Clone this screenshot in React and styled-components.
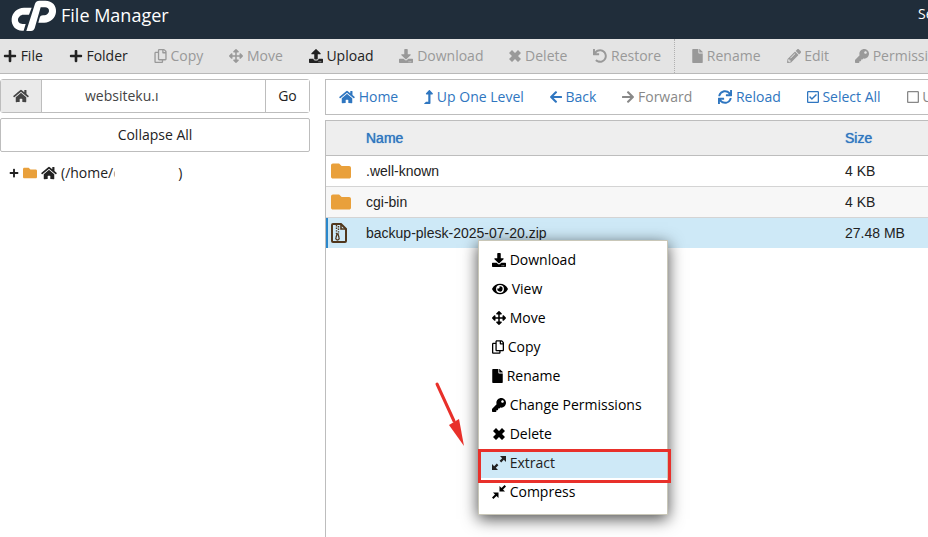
import React from "react";
import styled, { createGlobalStyle } from "styled-components";
import {
  FaArrowLeft,
  FaArrowRight,
  FaArrowsAlt,
  FaDownload,
  FaEye,
  FaFile,
  FaFolder,
  FaHome,
  FaKey,
  FaLevelUpAlt,
  FaPencilAlt,
  FaPlus,
  FaRegCheckSquare,
  FaRegCopy,
  FaRegSquare,
  FaSync,
  FaUndo,
  FaUpload,
} from "react-icons/fa";

const CpLogo = () => (
  <svg width="46" height="32" viewBox="0 0 138 96" role="img" aria-label="cPanel">
    <path
      fill="#fff"
      d="M62 23H39C18 23 4 38 2 56c-2 21 13 36 31 36h5l6-20h-9c-9 0-15-6-14-14 1-7 8-14 16-14h17Z"
    />
    <path
      fill="#fff"
      d="M72 11C74 5 79 2 85 2h18c21 0 34 15 32 34-2 18-16 32-35 32H82l4-15c2-5 5-7 10-7h4c7 0 13-5 14-12 1-8-5-12-12-12H89L71 85c-2 5-5 8-11 8H46Z"
    />
  </svg>
);

const Cross = () => (
  <svg viewBox="1 0 12 14" fill="currentColor">
    <path d="M4 1 7 4l3-3 3 3-3 3 3 3-3 3-3-3-3 3-3-3 3-3-3-3Z" />
  </svg>
);

const Expand = () => (
  <svg viewBox="0 0 14 14" fill="currentColor">
    <path d="M8 0h6v6l-2.2-2.2-2.6 2.6-1.6-1.6 2.6-2.6Z" />
    <path d="M6 14H0V8l2.2 2.2 2.6-2.6 1.6 1.6-2.6 2.6Z" />
  </svg>
);

const Shrink = () => (
  <svg viewBox="0 0 14 14" fill="currentColor">
    <path d="M7.5 6.5V1l2 2 3.1-3L14 1.4l-3 3.1 2 2Z" />
    <path d="M6.5 7.5V13l-2-2-3.1 3L0 12.6l3-3.1-2-2Z" />
  </svg>
);

const ZipFile = () => (
  <svg width="16" height="20" viewBox="0 0 16 20" fill="none" stroke="#51371d" strokeWidth="2">
    <path d="M2 1h8l5 5v12q0 1-1 1H2q-1 0-1-1V2q0-1 1-1Z" />
    <path d="M10 1v5h5" strokeWidth="1.6" />
    <path d="M5.5 2v9M7.5 3v8" strokeWidth="1.4" strokeDasharray="1.4 1.2" />
    <path d="m6 11-1 3.5a1.7 1.7 0 1 0 3 0L7 11Z" strokeWidth="1.3" />
  </svg>
);

const tools = [
  { label: "File", icon: <FaPlus />, active: true },
  { label: "Folder", icon: <FaPlus />, active: true },
  { label: "Copy", icon: <FaRegCopy />, width: 13 },
  { label: "Move", icon: <FaArrowsAlt /> },
  { label: "Upload", icon: <FaUpload />, active: true },
  { label: "Download", icon: <FaDownload /> },
  { label: "Delete", icon: <Cross />, width: 12 },
  { label: "Restore", icon: <FaUndo />, last: true },
  { label: "Rename", icon: <FaFile />, width: 11 },
  { label: "Edit", icon: <FaPencilAlt /> },
  { label: "Permissions", icon: <FaKey /> },
];

const links = [
  { label: "Home", icon: <FaHome />, width: 16 },
  { label: "Up One Level", icon: <FaLevelUpAlt />, width: 9 },
  { label: "Back", icon: <FaArrowLeft />, width: 12 },
  { label: "Forward", icon: <FaArrowRight />, width: 12, disabled: true },
  { label: "Reload", icon: <FaSync /> },
  { label: "Select All", icon: <FaRegCheckSquare />, width: 12 },
  { label: "Unselect All", icon: <FaRegSquare />, width: 12, disabled: true },
];

const files = [
  { name: ".well-known", size: "4 KB" },
  { name: "cgi-bin", size: "4 KB" },
  { name: "backup-plesk-2025-07-20.zip", size: "27.48 MB", zip: true },
];

const actions = [
  { label: "Download", icon: <FaDownload /> },
  { label: "View", icon: <FaEye />, width: 16 },
  { label: "Move", icon: <FaArrowsAlt /> },
  { label: "Copy", icon: <FaRegCopy />, width: 12 },
  { label: "Rename", icon: <FaFile />, width: 11 },
  { label: "Change Permissions", icon: <FaKey /> },
  { label: "Delete", icon: <Cross /> },
  { label: "Extract", icon: <Expand />, current: true },
  { label: "Compress", icon: <Shrink /> },
];

const App = () => {
  return (
    <Page>
      <GlobalStyle />
      <Header>
        <CpLogo />
        <Title>File Manager</Title>
        <SearchLabel>Search</SearchLabel>
      </Header>
      <Toolbar>
        {tools.map((t) => (
          <Tool key={t.label} type="button" disabled={!t.active} $last={t.last}>
            <Icon $width={t.width}>{t.icon}</Icon> {t.label}
          </Tool>
        ))}
      </Toolbar>
      <Main>
        <Sidebar>
          <PathForm>
            <HomeButton type="button" aria-label="Home">
              <Icon $width={16}>
                <FaHome />
              </Icon>
            </HomeButton>
            <PathInput aria-label="Path" defaultValue="websiteku.ı" />
            <GoButton type="button">Go</GoButton>
          </PathForm>
          <Collapse type="button">Collapse All</Collapse>
          <Tree>
            <FaPlus size={10} />
            <FaFolder size={14} color="#e9a03b" />
            <Icon $width={16}>
              <FaHome />
            </Icon>
            <span>(/home/</span>
            <Masked>c</Masked>
            <span>)</span>
          </Tree>
        </Sidebar>
        <Content>
          <Nav>
            {links.map((l) => (
              <NavLink key={l.label} href="#" $disabled={l.disabled}>
                <Icon $width={l.width}>{l.icon}</Icon> {l.label}
              </NavLink>
            ))}
          </Nav>
          <ListPanel>
            <Table>
              <thead>
                <tr>
                  <IconHead />
                  <Th>Name</Th>
                  <SizeHead>Size</SizeHead>
                </tr>
              </thead>
              <tbody>
                {files.map((f) => (
                  <Row key={f.name} $selected={f.zip}>
                    <IconCell>{f.zip ? <ZipFile /> : <FaFolder size={20} color="#e9a03b" />}</IconCell>
                    <Td>{f.name}</Td>
                    <Td>{f.size}</Td>
                  </Row>
                ))}
              </tbody>
            </Table>
          </ListPanel>
        </Content>
      </Main>
      <ContextMenu>
        {actions.map((a) => (
          <MenuItem key={a.label} type="button" $current={a.current}>
            <Icon $width={a.width}>{a.icon}</Icon> {a.label}
          </MenuItem>
        ))}
      </ContextMenu>
      <Highlight />
      <Pointer width="34" height="70" viewBox="0 0 34 70">
        <path d="M4 4 21 41" stroke="#e8302a" strokeWidth="3" strokeLinecap="round" />
        <path d="M16 45 26 39 31 66Z" fill="#e8302a" />
      </Pointer>
    </Page>
  );
};

export default App;

const GlobalStyle = createGlobalStyle`
  * {
    box-sizing: border-box;
  }

  body {
    margin: 0;
    background: #fff;
    color: #222;
    font-family: "Open Sans", sans-serif;
    font-size: 14px;
    line-height: 20px;
  }

  button,
  input {
    font: inherit;
    color: inherit;
  }

  svg {
    flex-shrink: 0;
  }
`;

const Icon = styled.span`
  display: inline-block;
  width: ${(p) => p.$width || 14}px;
  height: 14px;
  vertical-align: -2px;

  svg {
    display: block;
    width: 100%;
    height: 100%;
  }
`;

const Page = styled.div`
  position: relative;
  display: flex;
  flex-direction: column;
  min-height: 100vh;
  overflow: hidden;
`;

const Header = styled.header`
  display: flex;
  align-items: flex-start;
  height: 39px;
  padding-left: 11px;
  background: #202d3a;
  color: #fff;
`;

const Title = styled.h1`
  margin: 0;
  padding: 3px 0 0 4px;
  font-size: 18px;
  font-weight: 400;
  line-height: 25px;
`;

const SearchLabel = styled.span`
  width: 10px;
  margin-left: auto;
  padding-top: 4px;
  overflow: hidden;
`;

const Toolbar = styled.div`
  display: flex;
  height: 35px;
  background: #e4e4e4;
  border-bottom: 1px solid #b9b9b9;
  overflow: hidden;
`;

const Tool = styled.button`
  flex-shrink: 0;
  margin-right: ${(p) => (p.$last ? "4px" : "0")};
  padding: 0 13px;
  border: none;
  border-right: ${(p) => (p.$last ? "1px dotted #b0b0b0" : "none")};
  background: none;
  white-space: nowrap;

  &:first-child {
    padding-left: 3px;
  }

  &:disabled {
    color: #999;
  }
`;

const Main = styled.main`
  display: flex;
  flex: 1;
  gap: 15px;
  padding-top: 5px;
`;

const Sidebar = styled.aside`
  flex: 0 0 310px;
`;

const PathForm = styled.div`
  display: flex;
  height: 34px;
  border: 1px solid #bdbdbd;
  border-radius: 3px;
`;

const HomeButton = styled.button`
  width: 41px;
  padding: 0;
  border: none;
  border-right: 1px solid #bdbdbd;
  background: #eaeaea;
  color: #444;
`;

const PathInput = styled.input`
  flex: 1;
  min-width: 0;
  padding: 0 0 0 43px;
  border: none;
  color: #444;
`;

const GoButton = styled.button`
  width: 44px;
  padding: 0;
  border: none;
  border-left: 1px solid #bdbdbd;
  background: #fff;
`;

const Collapse = styled.button`
  display: block;
  width: 100%;
  height: 34px;
  margin-top: 5px;
  border: 1px solid #bdbdbd;
  border-radius: 2px;
  background: #fff;
`;

const Tree = styled.div`
  display: flex;
  align-items: center;
  gap: 4px;
  padding: 11px 0 0 9px;
`;

const Masked = styled.em`
  width: 2px;
  margin: 0 59px 0 -4px;
  overflow: hidden;
  color: #999;
  font-style: normal;
`;

const Content = styled.section`
  display: flex;
  flex: 1;
  flex-direction: column;
  min-width: 0;
`;

const Nav = styled.nav`
  display: flex;
  align-items: center;
  gap: 26px;
  height: 36px;
  padding-left: 13px;
  border: 1px solid #bdbdbd;
  border-right: none;
  overflow: hidden;
`;

const NavLink = styled.a`
  flex-shrink: 0;
  color: ${(p) => (p.$disabled ? "#888" : "#2f76c0")};
  text-decoration: none;
  white-space: nowrap;
`;

const ListPanel = styled.div`
  flex: 1;
  margin-top: 5px;
  border-top: 1px solid #bdbdbd;
  border-left: 1px solid #bdbdbd;
`;

const Table = styled.table`
  width: 100%;
  border-collapse: separate;
  border-spacing: 0;
  font-family: "Liberation Sans", Arial, sans-serif;
`;

const Th = styled.th`
  height: 35px;
  padding: 0;
  border-bottom: 1px solid #bdbdbd;
  background: #eee;
  color: #2f76c0;
  font-weight: 400;
  text-align: left;
  text-shadow: 0 0 1px currentColor;
`;

const IconHead = styled(Th)`
  width: 40px;
`;

const SizeHead = styled(Th)`
  width: 83px;
`;

const Td = styled.td`
  height: 31px;
  padding: 0;
  border-bottom: 1px solid #d4d4d4;
`;

const IconCell = styled(Td)`
  padding-left: 5px;

  svg {
    display: block;
  }
`;

const Row = styled.tr`
  background: ${(p) => (p.$selected ? "#cee9f7" : "#fff")};

  &:nth-child(2) {
    background: #f7f7f7;
  }

  &:last-child td {
    height: 30px;
    border-bottom: none;
  }

  &:last-child td:first-child {
    padding-left: 3px;
    border-left: 2px solid #2a87cb;
  }
`;

const ContextMenu = styled.div`
  position: absolute;
  top: 240px;
  left: 478px;
  width: 190px;
  padding: 5px 0 7px;
  border: 1px solid #c9c7b8;
  background: #fff;
  box-shadow: 0 4px 15px rgba(0, 0, 0, 0.7);
`;

const MenuItem = styled.button`
  display: block;
  width: 100%;
  height: 29px;
  padding: 4px 13px 5px;
  border: none;
  background: ${(p) => (p.$current ? "#cee9f7" : "none")};
  color: ${(p) => (p.$current ? "#222" : "#000")};
  text-align: left;
`;

const Highlight = styled.div`
  position: absolute;
  top: 449px;
  left: 478px;
  width: 193px;
  height: 34px;
  border: 3px solid #e8302a;
  pointer-events: none;
`;

const Pointer = styled.svg`
  position: absolute;
  top: 380px;
  left: 433px;
`;
